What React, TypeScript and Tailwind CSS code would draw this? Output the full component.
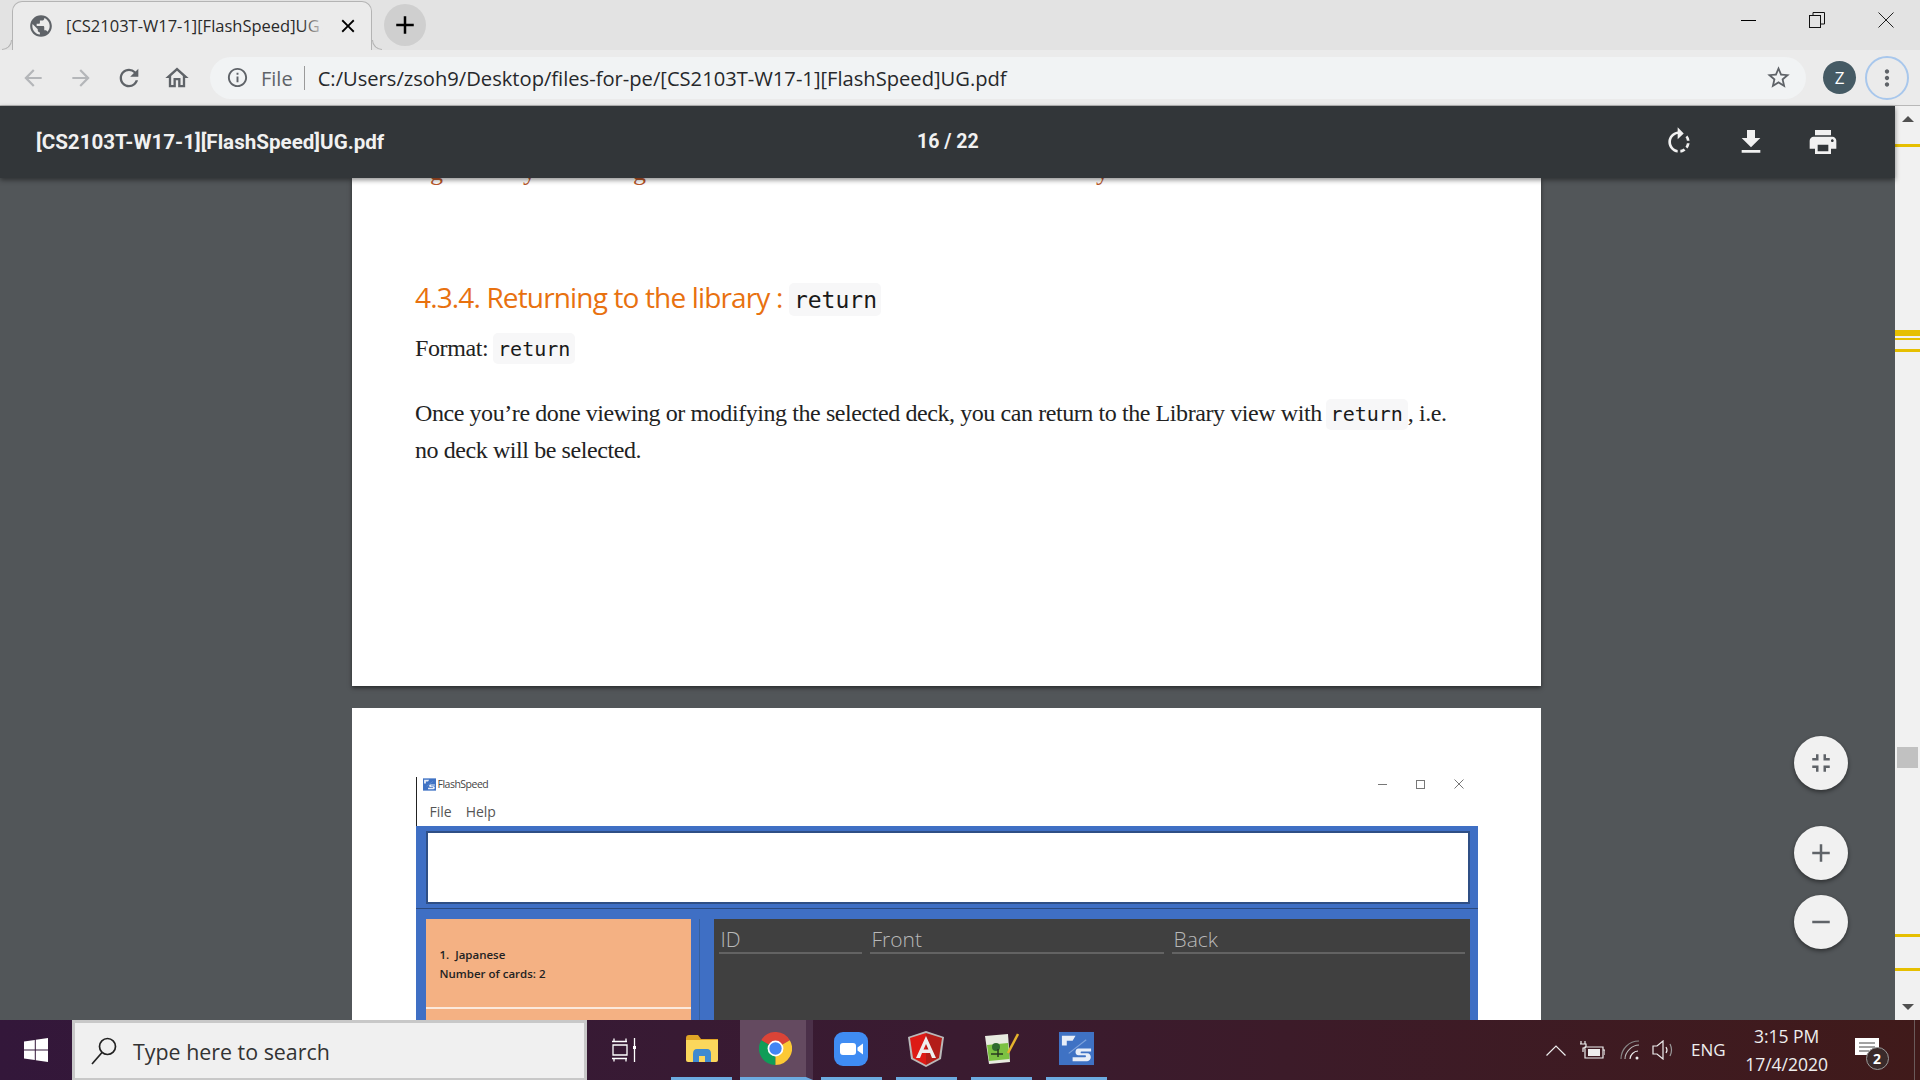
import React from "react";
import {
  MdAdd,
  MdArrowBack,
  MdArrowForward,
  MdClose,
  MdFileDownload,
  MdFullscreenExit,
  MdInfoOutline,
  MdMoreVert,
  MdOutlineHome,
  MdPrint,
  MdPublic,
  MdRefresh,
  MdRemove,
  MdRotateRight,
  MdStarBorder,
} from "react-icons/md";

const scrollMarks = [
  { top: 38, h: 3 },
  { top: 224, h: 6 },
  { top: 232, h: 2 },
  { top: 243, h: 3 },
  { top: 828, h: 3 },
  { top: 862, h: 3 },
];

const FlashLogo = ({ size }: { size: number }) => (
  <svg width={size} height={size} viewBox="0 0 36 34">
    <rect width="36" height="34" fill="#3f72c4" />
    <path d="M3 4h14l-3 5H8v5H3z" fill="#e8eef8" />
    <path d="M33 17H20c-4 0-4 7 0 7h7c1 0 1 2 0 2H14v4h15c5 0 5-8 0-8h-6c-1 0-1-2 0-2h10z" fill="#e8eef8" />
    <path d="M10 22 28 8" stroke="#7fa3dc" strokeWidth="1.2" />
  </svg>
);

const Tab = () => (
  <div className="relative ml-[12px] mt-[1px] flex h-[49px] w-[360px] items-center rounded-t-[10px] border border-b-0 border-[#b4b4b4] bg-[#ebebeb] pl-[15px]">
    <div className="absolute bottom-0 left-[-11px] h-[10px] w-[10px] rounded-br-[10px] border-b border-r border-[#b4b4b4]" />
    <div className="absolute bottom-0 right-[-11px] h-[10px] w-[10px] rounded-bl-[10px] border-b border-l border-[#b4b4b4]" />
    <MdPublic size={26} className="text-[#5f6368]" />
    <div className="relative ml-[12px] w-[260px] overflow-hidden whitespace-nowrap font-['Open_Sans'] text-[16.500px] text-[#2a2a2a]">
      [CS2103T-W17-1][FlashSpeed]UG
      <div className="absolute bottom-0 right-0 top-0 w-[24px] bg-gradient-to-r from-transparent to-[#ebebeb]" />
    </div>
    <MdClose size={22} className="ml-[11px] text-black" />
  </div>
);

const WindowButtons = () => (
  <div className="ml-auto flex items-center pr-[26px]">
    <div className="h-[1px] w-[15px] bg-black" />
    <svg width="16" height="16" viewBox="0 0 16 16" className="ml-[53px]" fill="none" stroke="#111">
      <rect x="0.5" y="3.5" width="11" height="12" />
      <path d="M4 3V.5h11.500V12H12" />
    </svg>
    <svg width="16" height="16" viewBox="0 0 16 16" className="ml-[53px]" stroke="#222">
      <path d="M.5.5l15 15M15.500.5l-15 15" />
    </svg>
  </div>
);

const AddressBar = () => (
  <div className="flex h-[55px] items-center bg-[#ebebeb]">
    <MdArrowBack size={26} className="ml-[20px] text-[#b4b6b9]" />
    <MdArrowForward size={26} className="ml-[22px] text-[#b4b6b9]" />
    <MdRefresh size={28} className="ml-[21px] text-[#5f6368]" />
    <MdOutlineHome size={28} className="ml-[20px] text-[#5f6368]" />
    <div className="ml-[19px] flex h-[42px] w-[1596px] items-center rounded-full bg-[#f1f3f4] pl-[16px]">
      <MdInfoOutline size={23} className="text-[#5f6368]" />
      <span className="ml-[12px] pt-[2px] font-['Open_Sans'] text-[20px] text-[#5f6368]">File</span>
      <div className="ml-[11px] h-[24px] w-[1px] bg-[#9a9a9a]" />
      <span className="ml-[13px] whitespace-nowrap pt-[2px] font-['Open_Sans'] text-[20.150px] text-[#26282b]">
        C:/Users/zsoh9/Desktop/files-for-pe/[CS2103T-W17-1][FlashSpeed]UG.pdf
      </span>
      <MdStarBorder size={27} className="ml-auto mr-[14px] text-[#5f6368]" />
    </div>
    <div className="ml-[17px] flex h-[33px] w-[33px] items-center justify-center rounded-full bg-[#455a64] font-['Open_Sans'] text-[17px] text-white">
      Z
    </div>
    <div className="ml-[9px] flex h-[44px] w-[44px] items-center justify-center rounded-full border-[2px] border-[#a8c7ec]">
      <MdMoreVert size={26} className="text-[#5f6368]" />
    </div>
  </div>
);

const PdfBar = () => (
  <div className="relative z-10 flex h-[72px] shrink-0 items-center bg-[#323639] font-['Roboto'] font-bold text-[#f1f1f1] shadow-[0_2px_5px_rgba(0,0,0,0.45)]">
    <div className="w-[720px] whitespace-nowrap pl-[36px] text-[20.600px]">[CS2103T-W17-1][FlashSpeed]UG.pdf</div>
    <div className="ml-[197px] w-[60px] whitespace-nowrap text-center text-[19.500px]">16 / 22</div>
    <div className="ml-auto flex items-center gap-[40px] pr-[56px]">
      <MdRotateRight size={32} />
      <MdFileDownload size={32} />
      <MdPrint size={32} />
    </div>
  </div>
);

const Code = ({ big }: { big?: boolean }) => (
  <span
    className={
      big
        ? "inline-flex h-[33px] w-[92px] items-center justify-center rounded-[5px] bg-[#f7f7f8] font-['DejaVu_Sans_Mono'] text-[23px] text-[#191919]"
        : "inline-flex h-[31px] w-[82px] items-center justify-center rounded-[5px] bg-[#f7f7f8] font-['DejaVu_Sans_Mono'] text-[20px] text-[#191919]"
    }
  >
    return
  </span>
);

const FirstPage = () => (
  <div className="h-[508px] w-[1189px] shrink-0 overflow-hidden bg-white pl-[63px] shadow-[0_2px_4px_rgba(0,0,0,0.5)]">
    <div className="mt-[-26px] flex h-[28px] font-['Liberation_Serif'] text-[26px] text-[#b8562a]">
      <span className="ml-[15px]">g</span>
      <span className="ml-[80px]">y</span>
      <span className="ml-[97px]">g</span>
      <span className="ml-[450px]">y</span>
    </div>
    <div className="mt-[100px] flex h-[33px] items-center whitespace-nowrap font-['Open_Sans'] text-[28px] text-[#e8710f]">
      <span className="tracking-[-0.85px]">4.3.4. Returning to the library :</span>
      <span className="ml-[7px]">
        <Code big />
      </span>
    </div>
    <div className="mt-[19px] flex h-[31px] items-center whitespace-nowrap font-['Liberation_Serif'] text-[24px] tracking-[-0.4px] text-[#222]">
      Format:
      <span className="ml-[5px] tracking-normal">
        <Code />
      </span>
    </div>
    <div className="mt-[32px] w-[1060px] font-['Liberation_Serif'] text-[24px] leading-[37px] tracking-[-0.42px] text-[#222]">
      <div className="flex h-[37px] items-center whitespace-nowrap">
        Once you’re done viewing or modifying the selected deck, you can return to the Library view with
        <span className="ml-[4px] tracking-normal">
          <Code />
        </span>
        , i.e.
      </div>
      <div>no deck will be selected.</div>
    </div>
  </div>
);

const EmbeddedApp = () => (
  <div className="mt-[69px] w-[1062px] font-['Open_Sans']">
    <div className="flex h-[14px] items-center border-l border-[#222] pl-[6px] pr-[14px]">
      <FlashLogo size={13} />
      <span className="ml-[2px] pt-[2px] text-[10.500px] tracking-[-0.5px] text-[#444]">FlashSpeed</span>
      <div className="ml-auto flex items-center text-[#777]">
        <div className="h-[1px] w-[9px] bg-[#777]" />
        <div className="ml-[29px] h-[9px] w-[9px] border border-[#777]" />
        <svg width="10" height="10" viewBox="0 0 10 10" className="ml-[29px]" stroke="#777">
          <path d="M.5.5l9 9M9.500.5l-9 9" />
        </svg>
      </div>
    </div>
    <div className="flex h-[35px] items-center gap-[14px] border-l border-[#222] pl-[13px] pt-[5px] text-[14px] text-[#555]">
      <span>File</span>
      <span>Help</span>
    </div>
    <div className="bg-[#3f6fc4]">
      <div className="border-b border-[#2c4a7e] pb-[4px] pl-[10px] pr-[8px] pt-[5px]">
        <div className="h-[73px] border-[2px] border-[#2f4f85] bg-white" />
      </div>
      <div className="flex h-[118px] pl-[10px] pr-[8px] pt-[10px]">
        <div className="w-[266px] bg-[#fbe9dc]">
          <div className="flex h-[88px] flex-col justify-center bg-[#f4b183] pl-[14px] pt-[1px] text-[11.500px] font-semibold leading-[19px] text-[#222]">
            <div className="whitespace-pre">1.  Japanese</div>
            <div>Number of cards: 2</div>
          </div>
          <div className="mt-[2px] h-[20px] bg-[#f4b183]" />
        </div>
        <div className="ml-[8px] h-full w-[1px] bg-[#35609f]" />
        <div className="ml-[14px] flex flex-1 gap-[8px] bg-[#404040] px-[5px] pt-[7px] text-[21px] font-light text-[#b8b8b8]">
          <div className="h-[28px] w-[143px] border-b-[2px] border-[#636363] pl-[2px] leading-[27px]">ID</div>
          <div className="h-[28px] w-[294px] border-b-[2px] border-[#636363] pl-[2px] leading-[27px]">Front</div>
          <div className="h-[28px] w-[293px] border-b-[2px] border-[#636363] pl-[2px] leading-[27px]">Back</div>
        </div>
      </div>
    </div>
  </div>
);

const Floating = ({ children, className }: { children: React.ReactNode; className: string }) => (
  <div className={`absolute left-[1794px] flex h-[54px] w-[54px] items-center justify-center rounded-full bg-[#f1f1f1] text-[#5f6368] shadow-[0_2px_4px_rgba(0,0,0,0.45)] ${className}`}>
    {children}
  </div>
);

const PdfView = () => (
  <div className="relative flex min-h-0 flex-1 flex-col items-center overflow-hidden bg-[#525659] pr-[2px]">
    <FirstPage />
    <div className="mt-[22px] flex h-[400px] w-[1189px] shrink-0 justify-center bg-white">
      <EmbeddedApp />
    </div>
    <Floating className="top-[558px]">
      <MdFullscreenExit size={30} />
    </Floating>
    <Floating className="top-[648px]">
      <MdAdd size={30} />
    </Floating>
    <Floating className="top-[717px]">
      <MdRemove size={30} />
    </Floating>
  </div>
);

const Scrollbar = () => (
  <div className="relative w-[25px] shrink-0 bg-[#f1f1f1]">
    <div className="absolute left-[7px] top-[10px] h-0 w-0 border-x-[6px] border-b-[6px] border-x-transparent border-b-[#505050]" />
    {scrollMarks.map((m) => (
      <div
        key={m.top}
        className="absolute left-0 w-full bg-[#e6bf00]"
        style={{ top: m.top, height: m.h }}
      />
    ))}
    <div className="absolute left-[2px] top-[641px] h-[21px] w-[21px] bg-[#c1c1c1]" />
    <div className="absolute bottom-[10px] left-[7px] h-0 w-0 border-x-[6px] border-t-[6px] border-x-transparent border-t-[#505050]" />
  </div>
);

const TaskIcon = ({ children, ml, w, active }: { children: React.ReactNode; ml: number; w: number; active?: boolean }) => (
  <div
    className={`flex h-full shrink-0 items-center justify-center border-b-[3px] border-[#6cabe0] ${active ? "border-r-[7px] border-r-[#4b3049] bg-[#644a60]" : ""}`}
    style={{ marginLeft: ml, width: w }}
  >
    {children}
  </div>
);

const Taskbar = () => (
  <div className="flex h-[60px] shrink-0 items-center bg-gradient-to-r from-[#33173a] via-[#3a1b30] to-[#401a1a] text-white">
    <div className="flex w-[72px] justify-center">
      <svg width="24" height="24" viewBox="0 0 24 24" fill="#fff">
        <path d="M0 3.400 10.800 2v9.400H0zM11.800 1.800 24 0v11.400H11.800zM0 12.500h10.800V22L0 20.600zM11.800 12.500H24V24l-12.200-1.800z" />
      </svg>
    </div>
    <div className="flex h-full w-[515px] items-center border-[3px] border-b-[2px] border-[#c8c8c8] bg-[#f0f0f0] pl-[16px]">
      <svg width="26" height="28" viewBox="0 0 26 28" fill="none" stroke="#222" strokeWidth="1.7">
        <circle cx="16.500" cy="9.500" r="8" />
        <path d="M11 15.500 1 27" />
      </svg>
      <span className="ml-[16px] pt-[3px] font-['Open_Sans'] text-[21.400px] text-[#333]">Type here to search</span>
    </div>
    <div className="flex w-[84px] justify-center pr-[11px]">
      <svg width="24" height="24" viewBox="0 0 24 24" fill="none" stroke="#fff" strokeWidth="1.3">
        <path d="M0 3.500h15M2 .5v3M14 .5v3M1 7h14v10H1zM0 20.500h15M2 20.500v3M14 20.500v3M22.500 0v8M22.500 11v13" />
        <rect x="21" y="8" width="3" height="3" fill="#fff" stroke="none" />
      </svg>
    </div>
    <TaskIcon ml={0} w={61}>
      <svg width="32" height="27" viewBox="0 0 32 27">
        <path d="M0 3q0-3 3-3h9l3 4h17v5H0z" fill="#e0a526" />
        <path d="M0 5h32v20q0 2-2 2H2q-2 0-2-2z" fill="#fbd75c" />
        <path d="M7 27V19q0-5 4-5h10q4 0 4 5v8h-6v-6h-6v6z" fill="#3e8ad0" />
      </svg>
    </TaskIcon>
    <TaskIcon ml={8} w={73} active>
      <svg width="33" height="33" viewBox="0 0 48 48" className="ml-[4px]">
        <path d="M24 24 3.200 12A24 24 0 0 1 44.800 12z" fill="#db4437" />
        <path d="M24 24 24 48A24 24 0 0 1 3.200 12z" fill="#0f9d58" />
        <path d="M24 24 44.800 12A24 24 0 0 1 24 48z" fill="#fcc934" />
        <circle cx="24" cy="24" r="11.500" fill="#fff" />
        <circle cx="24" cy="24" r="9" fill="#4285f4" />
      </svg>
    </TaskIcon>
    <TaskIcon ml={8} w={61}>
      <svg width="34" height="34" viewBox="0 0 34 34" className="mr-[1px]">
        <rect width="34" height="34" rx="9" fill="#3f8cf3" />
        <rect x="6" y="11" width="16" height="12" rx="3" fill="#fff" />
        <path d="M23.500 15.500 29 11.500v11l-5.500-4z" fill="#fff" />
      </svg>
    </TaskIcon>
    <TaskIcon ml={14} w={61}>
      <svg width="36" height="36" viewBox="0 0 36 36" className="mr-[1px]">
        <path d="M18 0 36 6l-3 22-15 8-15-8L0 6z" fill="#b9b9b9" />
        <path d="M18 2 2 7l3 20 13 7z" fill="#dd1b16" />
        <path d="M18 2l16 5-3 20-13 7z" fill="#b31d19" />
        <path d="M18 5 8 27h4l2-5h8l2 5h4zM15.500 18.500 18 13l2.500 5.500z" fill="#eee" fillRule="evenodd" />
      </svg>
    </TaskIcon>
    <TaskIcon ml={14} w={61}>
      <svg width="35" height="32" viewBox="0 0 35 32">
        <path d="M1 3 24 1l2 28-21 2z" fill="#e8ebe0" />
        <path d="M3 12 24 10l1.500 16L5 28z" fill="#7cc142" />
        <circle cx="12" cy="14" r="4" fill="#2f6b2d" />
        <path d="M7 21h12M14 16v8" stroke="#2a3a20" strokeWidth="1.500" />
        <path d="M34 1 24 20" stroke="#e5b32d" strokeWidth="2.500" />
      </svg>
    </TaskIcon>
    <TaskIcon ml={14} w={61}>
      <FlashLogo size={35} />
    </TaskIcon>
    <div className="ml-[439px] flex items-center">
      <svg width="20" height="11" viewBox="0 0 20 11" fill="none" stroke="#eee" strokeWidth="1.2">
        <path d="M.5 10.500 10 1l9.500 9.500" />
      </svg>
      <svg width="25" height="20" viewBox="0 0 25 20" className="ml-[14px]" fill="none" stroke="#eee" strokeWidth="1.2">
        <path d="M1 1v3M5 1v3M0 4h6v2q0 2-3 2v4M5 7h18v11H5zM23 10h2v5" />
        <rect x="8" y="9" width="12" height="7" fill="#eee" stroke="none" />
      </svg>
      <svg width="20" height="20" viewBox="0 0 20 20" className="ml-[15px]" fill="none" stroke="#bbb" strokeWidth="1.100">
        <path d="M1 19C1 9 9 1 19 1" stroke="#888" />
        <path d="M5 19C5 12 12 5 19 5" />
        <path d="M10 19c0-4 4-8 8-8" stroke="#eee" />
        <circle cx="17" cy="18" r="1.500" fill="#eee" stroke="none" />
      </svg>
      <svg width="23" height="20" viewBox="0 0 23 20" className="ml-[12px]" fill="none" stroke="#eee" strokeWidth="1.200">
        <path d="M1 6h4l6-5v18l-6-5H1z" />
        <path d="M14 7q2 3 0 6" />
        <path d="M18 4q3 6 0 12" stroke="#999" />
      </svg>
    </div>
    <span className="ml-[16px] whitespace-nowrap font-['Open_Sans'] text-[17px] text-[#eee]">ENG</span>
    <div className="ml-[11px] w-[100px] text-center font-['Open_Sans'] text-[17.500px] leading-[28px] text-[#eee]">
      <div>3:15 PM</div>
      <div>17/4/2020</div>
    </div>
    <div className="relative ml-[18px]">
      <svg width="26" height="24" viewBox="0 0 26 24" fill="#fff">
        <path d="M0 0h24v17h-6l-5 7v-7H0z" />
        <path d="M4 5h16M4 9h16M4 13h10" stroke="#444" strokeWidth="1" />
      </svg>
      <div className="absolute left-[11px] top-[9px] flex h-[23px] w-[23px] items-center justify-center rounded-full border border-[#999] bg-[#3a2a2a] font-['Open_Sans'] text-[14px] font-bold text-white">
        2
      </div>
    </div>
    <div className="ml-auto mr-[5px] h-full w-[1px] bg-[#6a5a5a]" />
  </div>
);

export default function App() {
  return (
    <div className="flex h-screen w-full flex-col overflow-hidden bg-[#525659]">
      <div className="flex h-[51px] shrink-0 items-start border-b border-[#b4b4b4] bg-[#e3e3e3]">
        <Tab />
        <div className="ml-[12px] mt-[4px] flex h-[42px] w-[42px] items-center justify-center rounded-full bg-[#cfcfcf]">
          <MdAdd size={30} className="text-black" />
        </div>
        <div className="flex h-[40px] flex-1 items-center">
          <WindowButtons />
        </div>
      </div>
      <div className="mt-[-1px] shrink-0 border-b border-[#b8b8b8]">
        <AddressBar />
      </div>
      <div className="flex min-h-0 flex-1">
        <div className="flex min-w-0 flex-1 flex-col">
          <PdfBar />
          <PdfView />
        </div>
        <Scrollbar />
      </div>
      <Taskbar />
    </div>
  );
}
